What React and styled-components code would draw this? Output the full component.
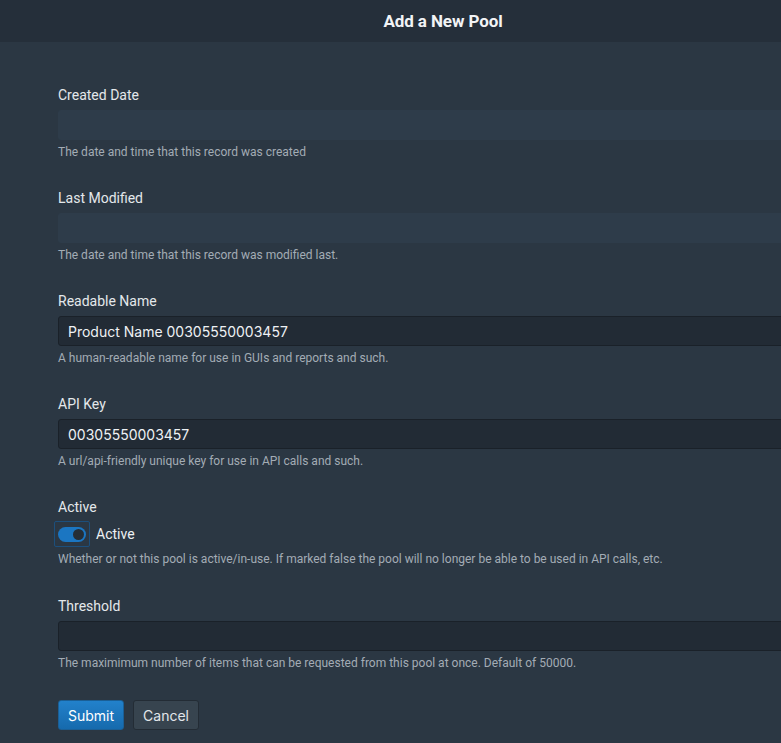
import React, { useState } from 'react';
import styled, { createGlobalStyle } from 'styled-components';

const GlobalStyle = createGlobalStyle`
  html, body {
    margin: 0;
    padding: 0;
    background: #2b3743;
    overflow: hidden;
  }
  * {
    box-sizing: border-box;
  }
`;

const Page = styled.div`
  width: 886px;
  min-height: 743px;
  background: #2b3743;
  font-family: Roboto, 'Liberation Sans', sans-serif;
  color: #e4e8eb;
`;

const TopBar = styled.header`
  height: 42px;
  background: #252f3a;
  display: flex;
  align-items: center;
  justify-content: center;
`;

const Title = styled.h1`
  margin: 0;
  font-size: 17px;
  font-weight: 700;
  color: #f2f4f6;
  letter-spacing: -0.1px;
`;

const Form = styled.form`
  padding: 43px 0 0 58px;
  display: flex;
  flex-direction: column;
`;

const Field = styled.div`
  display: flex;
  flex-direction: column;
  margin-bottom: ${(p) => p.gap || 28}px;
`;

const Label = styled.label`
  font-size: 14px;
  line-height: 20px;
  color: #e4e8eb;
  margin-bottom: ${(p) => p.gap || 5}px;
`;

const Input = styled.input`
  height: 30px;
  width: 100%;
  padding: 0 9px;
  font-family: Inter, 'Open Sans', sans-serif;
  font-size: 14px;
  color: #eef1f4;
  border-radius: 3px;
  outline: none;
  background: ${(p) => (p.readOnly ? '#2e3c4a' : '#222b35')};
  border: 1px solid ${(p) => (p.readOnly ? '#2e3c4a' : '#1a2129')};
`;

const Help = styled.div`
  margin-top: ${(p) => p.gap || 4}px;
  font-size: 12px;
  line-height: 16px;
  color: #a3acb5;
`;

const ToggleRow = styled.div`
  display: flex;
  align-items: center;
  gap: 6px;
  height: 28px;
  margin-left: -4px;
`;

const ToggleBox = styled.button`
  width: 36px;
  height: 26px;
  padding: 0;
  display: flex;
  align-items: center;
  justify-content: center;
  background: transparent;
  border: 1px solid #1c4f7c;
  border-radius: 2px;
  cursor: pointer;
`;

const Pill = styled.span`
  position: relative;
  width: 28px;
  height: 15px;
  border-radius: 8px;
  background: ${(p) => (p.on ? '#1b76c2' : '#4a5662')};
`;

const Knob = styled.span`
  position: absolute;
  top: 2px;
  left: ${(p) => (p.on ? 15 : 2)}px;
  width: 11px;
  height: 11px;
  border-radius: 50%;
  background: #252e37;
`;

const ToggleText = styled.span`
  font-size: 14px;
  color: #eef1f4;
`;

const Actions = styled.div`
  display: flex;
  gap: 9px;
`;

const Button = styled.button`
  height: 30px;
  padding: 0 9px;
  font-family: Inter, 'Open Sans', sans-serif;
  font-size: 14px;
  border-radius: 3px;
  cursor: pointer;
  color: ${(p) => (p.primary ? '#ffffff' : '#e2e6ea')};
  background: ${(p) =>
    p.primary ? 'linear-gradient(#2281cb, #166aad)' : '#37444f'};
  border: 1px solid ${(p) => (p.primary ? '#1a5f96' : '#232c35')};
`;

const fields = [
  { label: 'Created Date', value: '', readOnly: true, help: 'The date and time that this record was created' },
  { label: 'Last Modified', value: '', readOnly: true, help: 'The date and time that this record was modified last.' },
  { label: 'Readable Name', value: 'Product Name 00305550003457', help: 'A human-readable name for use in GUIs and reports and such.' },
  { label: 'API Key', value: '00305550003457', help: 'A url/api-friendly unique key for use in API calls and such.' },
];

export default function App() {
  const [active, setActive] = useState(true);

  return (
    <Page>
      <GlobalStyle />
      <TopBar>
        <Title>Add a New Pool</Title>
      </TopBar>
      <Form onSubmit={(e) => e.preventDefault()}>
        {fields.map((f) => (
          <Field key={f.label}>
            <Label>{f.label}</Label>
            <Input readOnly={f.readOnly} defaultValue={f.value} />
            <Help>{f.help}</Help>
          </Field>
        ))}

        <Field gap={29}>
          <Label gap={3}>Active</Label>
          <ToggleRow>
            <ToggleBox type="button" onClick={() => setActive(!active)}>
              <Pill on={active}>
                <Knob on={active} />
              </Pill>
            </ToggleBox>
            <ToggleText>Active</ToggleText>
          </ToggleRow>
          <Help gap={3}>
            Whether or not this pool is active/in-use. If marked false the pool will no longer be able to be used in API calls, etc.
          </Help>
        </Field>

        <Field gap={29}>
          <Label>Threshold</Label>
          <Input defaultValue="" />
          <Help>The maximimum number of items that can be requested from this pool at once. Default of 50000.</Help>
        </Field>

        <Actions>
          <Button primary type="submit">Submit</Button>
          <Button type="button">Cancel</Button>
        </Actions>
      </Form>
    </Page>
  );
}
